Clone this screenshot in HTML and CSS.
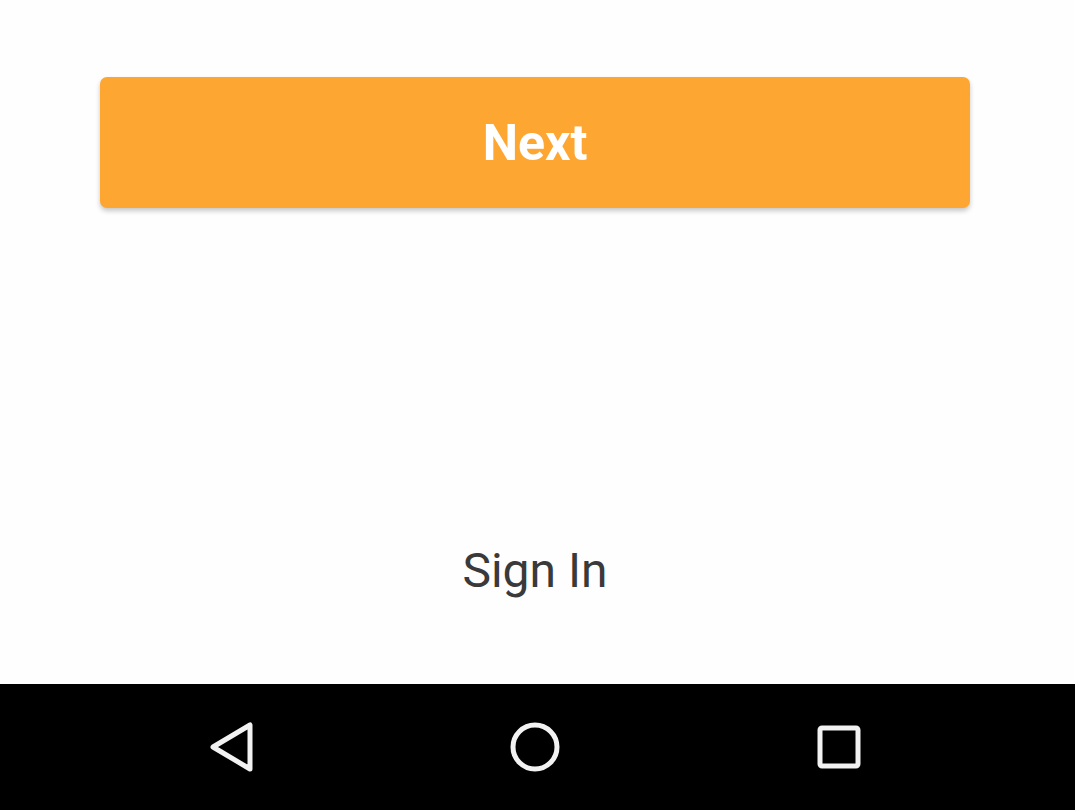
FILE: index.html
```html
<!DOCTYPE html>
<html>
<head>
<meta charset="utf-8">
<link rel="stylesheet" href="styles.css">
</head>
<body>
<div class="screen">
  <main class="content">
    <button class="next-btn">Next</button>
    <div class="spacer"></div>
    <div class="sign-in">Sign In</div>
  </main>
  <nav class="navbar">
    <svg class="nav-icon" width="60" height="60" viewBox="0 0 60 60">
      <path d="M49 8 L49 52 L12 30 Z" fill="none" stroke="#f2f2f2" stroke-width="5" stroke-linejoin="round"/>
    </svg>
    <svg class="nav-icon" width="60" height="60" viewBox="0 0 60 60">
      <circle cx="30" cy="30" r="22" fill="none" stroke="#f2f2f2" stroke-width="5"/>
    </svg>
    <svg class="nav-icon" width="60" height="60" viewBox="0 0 60 60">
      <rect x="11" y="11" width="38" height="38" rx="2" fill="none" stroke="#f2f2f2" stroke-width="5"/>
    </svg>
  </nav>
</div>
</body>
</html>
```

FILE: styles.css
```css
html, body {
  margin: 0;
  padding: 0;
  background: #fefefe;
}
.screen {
  width: 1075px;
  height: 810px;
  display: flex;
  flex-direction: column;
  font-family: Roboto, "Liberation Sans", sans-serif;
}
.content {
  height: 684px;
  display: flex;
  flex-direction: column;
  align-items: center;
  padding: 77px 5px 0 0;
  box-sizing: border-box;
}
.next-btn {
  width: 870px;
  height: 131px;
  border: none;
  border-radius: 7px;
  background: #fda732;
  color: #ffffff;
  font-family: Roboto, "Liberation Sans", sans-serif;
  font-weight: 700;
  font-size: 50px;
  box-shadow: 0 3px 5px rgba(0,0,0,0.22);
  padding: 0;
}
.spacer {
  height: 335px;
}
.sign-in {
  font-size: 48px;
  color: #3a3a3a;
  line-height: 56px;
}
.navbar {
  flex: 1;
  background: #000;
  display: flex;
  align-items: center;
  gap: 244px;
  padding-left: 201px;
}
.nav-icon {
  display: block;
}
```
